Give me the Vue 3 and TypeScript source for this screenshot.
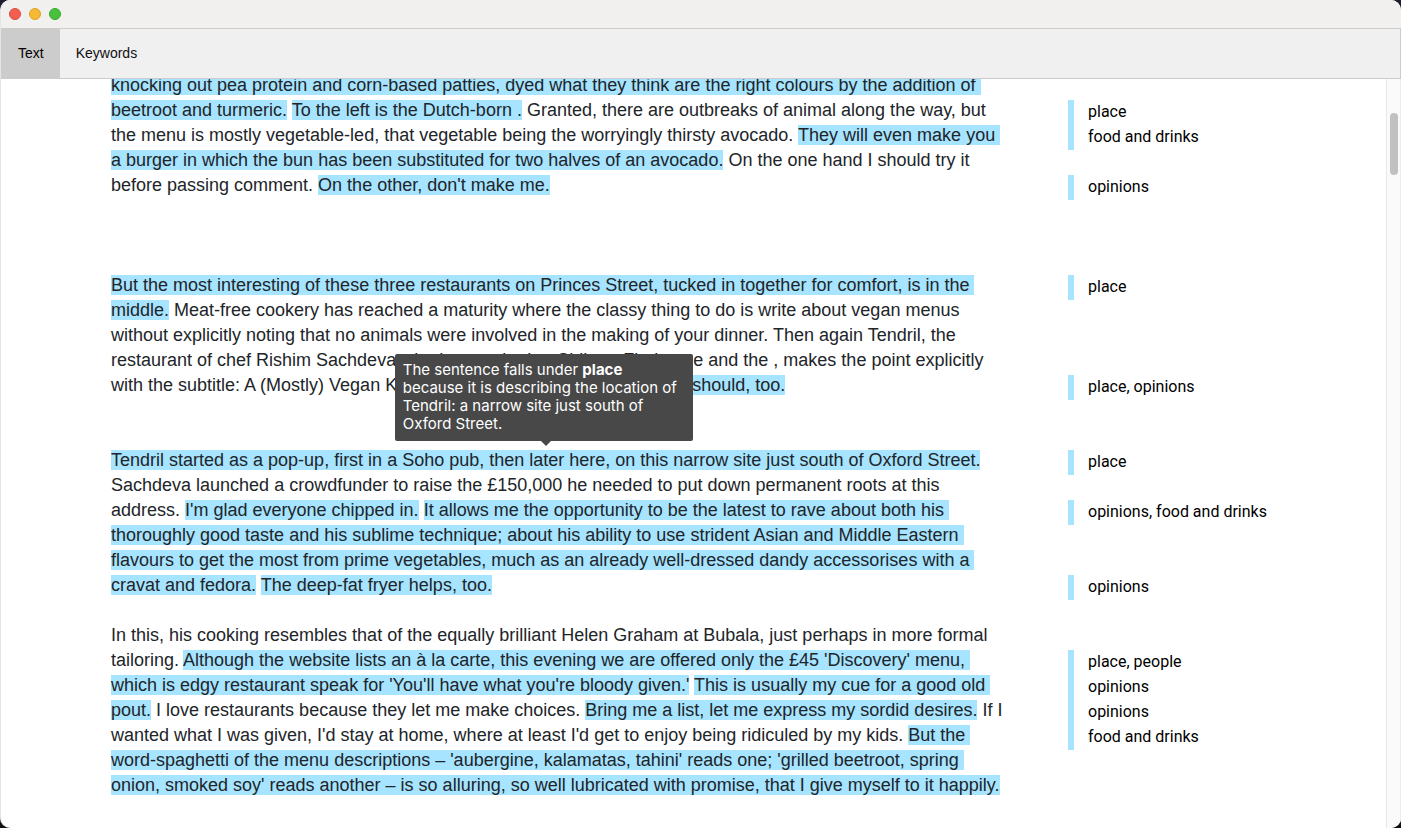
<script setup lang="ts">
import { ref } from 'vue'

interface Segment {
  text: string
  marked?: boolean
  tip?: boolean
}
interface Note {
  row: number
  labels: string[]
}

const tabs = ['Text', 'Keywords']
const active = ref('Text')

const t = (text: string): Segment => ({ text })
const m = (text: string): Segment => ({ text, marked: true })

const lines: Segment[][] = [
  [m('knocking out pea protein and corn-based patties, dyed what they think are the right colours by the addition of ')],
  [m('beetroot and turmeric.'), t(' '), m('To the left is the Dutch-born .'), t(' Granted, there are outbreaks of animal along the way, but')],
  [t('the menu is mostly vegetable-led, that vegetable being the worryingly thirsty avocado. '), m('They will even make you ')],
  [m('a burger in which the bun has been substituted for two halves of an avocado.'), t(' On the one hand I should try it')],
  [t('before passing comment. '), m("On the other, don't make me.")],
  [],
  [],
  [],
  [m('But the most interesting of these three restaurants on Princes Street, tucked in together for comfort, is in the ')],
  [m('middle.'), t(' Meat-free cookery has reached a maturity where the classy thing to do is write about vegan menus')],
  [t('without explicitly noting that no animals were involved in the making of your dinner. Then again Tendril, the')],
  [t('restaurant of chef Rishim Sachdeva who has worked at Chiltern Firehouse and the , makes the point explicitly')],
  [t('with the subtitle: A (Mostly) Vegan Kitchen. '), m('Which means that someday I should, too.')],
  [],
  [],
  [{ text: 'Tendril started as a pop-up, first in a Soho pub, then later here, on this narrow site just south of Oxford Street.', marked: true, tip: true }],
  [t('Sachdeva launched a crowdfunder to raise the £150,000 he needed to put down permanent roots at this')],
  [t('address. '), m("I'm glad everyone chipped in."), t(' '), m('It allows me the opportunity to be the latest to rave about both his ')],
  [m('thoroughly good taste and his sublime technique; about his ability to use strident Asian and Middle Eastern ')],
  [m('flavours to get the most from prime vegetables, much as an already well-dressed dandy accessorises with a ')],
  [m('cravat and fedora.'), t(' '), m('The deep-fat fryer helps, too.')],
  [],
  [t('In this, his cooking resembles that of the equally brilliant Helen Graham at Bubala, just perhaps in more formal')],
  [t('tailoring. '), m("Although the website lists an à la carte, this evening we are offered only the £45 'Discovery' menu, ")],
  [m("which is edgy restaurant speak for 'You'll have what you're bloody given.'"), t(' '), m('This is usually my cue for a good old ')],
  [m('pout.'), t(' I love restaurants because they let me make choices. '), m('Bring me a list, let me express my sordid desires.'), t(' If I')],
  [t("wanted what I was given, I'd stay at home, where at least I'd get to enjoy being ridiculed by my kids. "), m('But the ')],
  [m("word-spaghetti of the menu descriptions – 'aubergine, kalamatas, tahini' reads one; 'grilled beetroot, spring ")],
  [m("onion, smoked soy' reads another – is so alluring, so well lubricated with promise, that I give myself to it happily.")],
]

const notes: Note[] = [
  { row: 2, labels: ['place', 'food and drinks'] },
  { row: 5, labels: ['opinions'] },
  { row: 9, labels: ['place'] },
  { row: 13, labels: ['place, opinions'] },
  { row: 16, labels: ['place'] },
  { row: 18, labels: ['opinions, food and drinks'] },
  { row: 21, labels: ['opinions'] },
  { row: 24, labels: ['place, people', 'opinions', 'opinions', 'food and drinks'] },
]
const place = notes.map((n) => ({ gridRow: `${n.row} / span ${n.labels.length}` }))
</script>

<template>
  <div class="desktop">
    <div class="window">
      <header class="titlebar">
        <button class="light close" aria-label="Close"></button>
        <button class="light minimise" aria-label="Minimise"></button>
        <button class="light zoom" aria-label="Zoom"></button>
      </header>
      <nav class="tabs">
        <button
          v-for="tab in tabs"
          :key="tab"
          class="tab"
          :class="{ active: tab === active }"
          @click="active = tab"
        >{{ tab }}</button>
      </nav>
      <main class="body">
        <div class="viewport">
          <div class="document">
            <article class="text">
              <div v-for="(line, i) in lines" :key="i" class="line"><span
                v-for="(seg, j) in line" :key="j" :class="{ marked: seg.marked, anchor: seg.tip }"
              >{{ seg.text }}<span v-if="seg.tip" class="tooltip" role="tooltip">The sentence falls under <strong>place</strong> because it is describing the location of Tendril: a narrow site just south of Oxford Street.</span></span></div>
            </article>
            <aside class="notes">
              <div v-for="(note, i) in notes" :key="i" class="note" :style="place[i]">
                <div v-for="(label, j) in note.labels" :key="j" class="label">{{ label }}</div>
              </div>
            </aside>
          </div>
        </div>
        <div class="scrollbar"><div class="thumb"></div></div>
      </main>
    </div>
  </div>
</template>

<style>
body {
  margin: 0;
  background: #fff;
}
</style>

<style scoped>
.desktop {
  box-sizing: border-box;
  height: 100vh;
  padding-bottom: 3px;
  background: linear-gradient(#1b1f2e 0 50%, #111 50% calc(100% - 3px), #fff calc(100% - 3px));
}
.window {
  display: flex;
  flex-direction: column;
  box-sizing: border-box;
  height: 100%;
  border-left: 1px solid #e4e4e4;
  border-radius: 10px;
  overflow: hidden;
  background: #fff;
}
.titlebar {
  display: flex;
  align-items: center;
  flex: none;
  gap: 8px;
  height: 28px;
  padding-left: 8px;
  background: #f2f0ef;
}
.light {
  box-sizing: border-box;
  width: 12px;
  height: 12px;
  padding: 0;
  border: 1px solid;
  border-radius: 50%;
}
.close {
  background: #f35e51;
  border-color: #dd4a40;
}
.minimise {
  background: #f6b935;
  border-color: #dfa023;
}
.zoom {
  background: #48c13c;
  border-color: #35a92c;
}
.tabs {
  display: flex;
  flex: none;
  box-sizing: border-box;
  height: 51px;
  border: 1px solid #ccc;
  background: #f0f0f0;
}
.tab {
  padding: 0 16px 2px;
  border: 0;
  background: transparent;
  color: #111;
  font: 14px "Liberation Sans", Arial, sans-serif;
}
.tab.active {
  background: #ccc;
  color: #000;
}
.body {
  display: flex;
  flex: 1;
  min-height: 0;
}
.viewport {
  flex: 1;
  overflow: hidden;
}
.document {
  display: flex;
  gap: 66px;
  margin-top: -6px;
  padding-left: 110px;
}
.text {
  flex: none;
  width: 891px;
  color: #212529;
  font: 18px/25px "Liberation Sans", Arial, sans-serif;
  white-space: pre;
}
.line {
  height: 25px;
}
.marked {
  background: #a6e4ff;
}
.anchor {
  position: relative;
}
.tooltip {
  position: absolute;
  bottom: calc(100% + 9px);
  left: 50%;
  box-sizing: border-box;
  width: 298px;
  margin-left: -151px;
  padding: 7px 8px 8px;
  border-radius: 2px;
  background: #484848;
  color: #fff;
  font: 15px/18px Inter, sans-serif;
  white-space: normal;
}
.tooltip::after {
  content: "";
  position: absolute;
  top: 100%;
  left: 50%;
  border: 5px solid transparent;
  border-top-color: #484848;
  border-bottom: 0;
  margin-left: -3px;
}
.notes {
  display: grid;
  flex: 1;
  grid-auto-rows: 25px;
  align-content: start;
  padding-top: 2px;
  color: #000;
  font: 16px/23px Roboto, sans-serif;
}
.note {
  padding-left: 14px;
  border-left: 6px solid #a6e4ff;
}
.label {
  padding-bottom: 2px;
}
.scrollbar {
  flex: none;
  box-sizing: border-box;
  width: 15px;
  padding: 34px 3px 0;
  border-left: 1px solid #e8e8e8;
  border-right: 1px solid #ededed;
  background: #fafafa;
}
.thumb {
  width: 8px;
  height: 62px;
  border-radius: 4px;
  background: #c1c1c1;
}
</style>
